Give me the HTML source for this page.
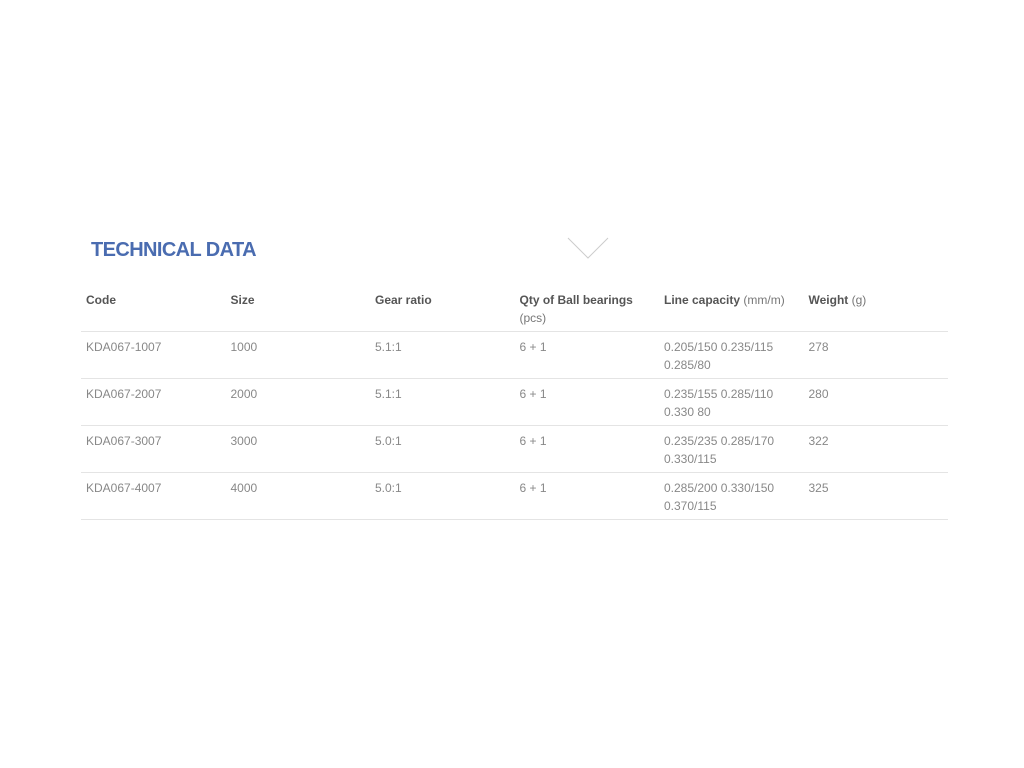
<!DOCTYPE html>
<html><head><meta charset="utf-8"><style>
body{margin:0;background:#fff;font-family:"Liberation Sans",sans-serif;}
h2{position:absolute;left:91px;top:239px;margin:0;font-size:20px;font-weight:bold;color:#4a6cb0;letter-spacing:-0.6px;}
table{position:absolute;left:81px;top:291px;width:867px;border-collapse:collapse;font-size:12px;line-height:18px;}
td,th{text-align:left;vertical-align:top;padding:0 5px;width:135px;box-sizing:border-box;}
th{color:#555;font-weight:bold;height:40px;padding-top:0;}
th span{font-weight:normal;color:#777;}
td{color:#888;height:47px;padding-top:6px;}
tr{border-bottom:1px solid #e4e4e4;}
</style></head><body>
<h2>TECHNICAL DATA</h2>
<svg style="position:absolute;left:566px;top:236px" width="44" height="24"><polyline points="2,2 22,22 42,2" fill="none" stroke="#ccc" stroke-width="1"/></svg>
<table>
<tr><th>Code</th><th>Size</th><th>Gear ratio</th><th>Qty of Ball bearings <span>(pcs)</span></th><th>Line capacity <span>(mm/m)</span></th><th>Weight <span>(g)</span></th></tr>
<tr><td>KDA067-1007</td><td>1000</td><td>5.1:1</td><td>6 + 1</td><td>0.205/150 0.235/115 0.285/80</td><td>278</td></tr>
<tr><td>KDA067-2007</td><td>2000</td><td>5.1:1</td><td>6 + 1</td><td>0.235/155 0.285/110 0.330 80</td><td>280</td></tr>
<tr><td>KDA067-3007</td><td>3000</td><td>5.0:1</td><td>6 + 1</td><td>0.235/235 0.285/170 0.330/115</td><td>322</td></tr>
<tr><td>KDA067-4007</td><td>4000</td><td>5.0:1</td><td>6 + 1</td><td>0.285/200 0.330/150 0.370/115</td><td>325</td></tr>
</table>
</body></html>
